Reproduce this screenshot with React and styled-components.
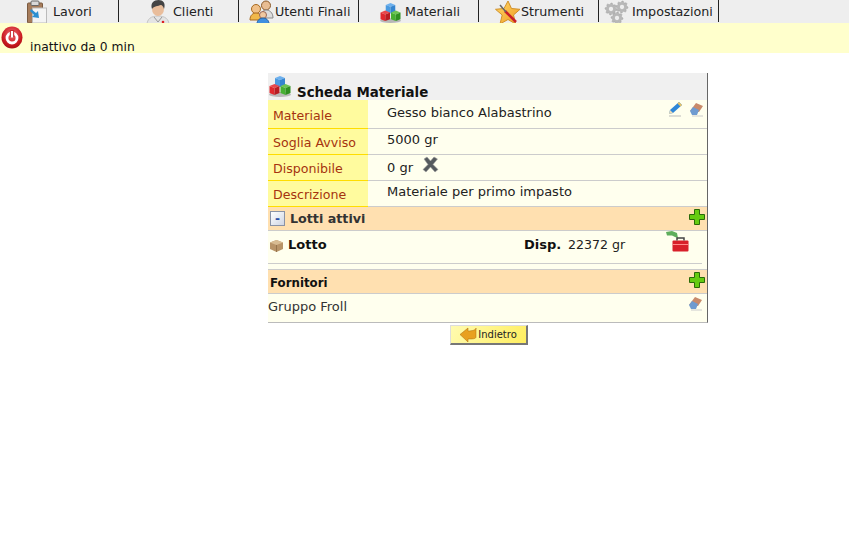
import React from 'react';
import styled, { createGlobalStyle } from 'styled-components';

const Global = createGlobalStyle`
  html, body { margin: 0; padding: 0; background: #fff; }
  body { font-family: "DejaVu Sans", Verdana, sans-serif; font-size: 13px; color: #222; }
`;
const Page = styled.div`width: 849px; height: 535px; overflow: hidden; background: #fff;`;
const Nav = styled.nav`display: flex; height: 23px; background: #eeeeee; overflow: hidden;`;
const Tab = styled.div`
  width: 120px; height: 22px; box-sizing: border-box; flex: none;
  display: flex; align-items: center; gap: ${p => p.$gap}px; padding-left: ${p => p.$pl}px;
  border-right: 1px solid #222; font-size: 12.7px; color: #222; white-space: nowrap;
  &:first-child { width: 119px; }
`;
const TabIcon = styled.svg`
  width: ${p => p.$w}px; height: ${p => p.$h}px; flex: none; margin-top: ${p => p.$mt ?? 2}px;
  margin-bottom: ${p => p.$mb ?? 0}px; overflow: visible;
`;
const Notice = styled.div`height: 30px; background: #ffffcc; display: flex; align-items: flex-start; color: #111;`;
const NoticeText = styled.span`margin: 16px 0 0 7px; line-height: 16px; font-size: 12.3px;`;
const Power = styled.svg`width: 22px; height: 23px; margin: 3px 0 0 1px; flex: none;`;
const Panel = styled.section`
  width: 440px; margin: 20px 0 0 268px; box-sizing: border-box; border-right: 1px solid #666;
  background: #ffffee; border-bottom: 1px solid #bbb;
`;
const Title = styled.header`
  height: 27px; background: #f0f0f0; display: flex; align-items: flex-end; gap: 6px; padding-left: 1px;
  font-weight: bold; font-size: 13.4px; color: #111; line-height: 17px;
`;
const TitleText = styled.span`margin-bottom: -1px;`;
const Row = styled.div`display: grid; grid-template-columns: 100px 1fr; height: ${p => p.$h}px; box-sizing: border-box;`;
const Label = styled.div`
  background: #fffb9e; border-bottom: 1px solid #ffdd00; color: #a5330f; font-size: 12.6px;
  padding: ${p => p.$pt ?? 6}px 0 0 5px; line-height: 16px;
`;
const Value = styled.div`
  border-bottom: 1px solid #ccc; padding: ${p => p.$pt ?? 5}px 6px 0 19px; line-height: 16px; color: #222;
  display: flex; align-items: flex-start; justify-content: space-between;
`;
const Inline = styled.span`display: inline-flex; align-items: flex-start; gap: 9px;`;
const Actions = styled.span`display: inline-flex; gap: 5px; margin: -4px ${p => p.$mr ?? -4}px 0 0;`;
const Small = styled.svg`
  width: ${p => p.$w || 16}px; height: ${p => p.$h || 16}px; flex: none; overflow: visible; margin-top: ${p => p.$mt || 0}px;
`;
const Section = styled.div`
  height: ${p => p.$h}px; box-sizing: border-box; background: #ffe0b0; display: flex; align-items: center;
  justify-content: space-between; border-bottom: 1px solid #ccc; border-top: ${p => p.$top ? '1px solid #ccc' : 'none'};
  font-weight: bold; font-size: ${p => p.$fs || 13}px; padding: 0 2px 0 2px; color: ${p => p.$c || '#333'};
`;
const SectionLead = styled.span`display: inline-flex; align-items: center; gap: 5px; font-size: 12.7px;`;
const SectionName = styled.span`padding-top: 2px;`;
const Toggle = styled.span`
  width: 15px; height: 15px; box-sizing: border-box; border: 1px solid #8a93a6; background: linear-gradient(135deg,#fff,#cfd6e4);
  color: #2c4fa8; display: flex; align-items: center; justify-content: center; font-size: 12px; line-height: 12px;
`;
const LotRow = styled.div`
  height: 33px; box-sizing: border-box; margin-right: 5px; border-bottom: 1px solid #ccc;
  display: flex; align-items: flex-start; padding-top: 6px;
`;
const LotName = styled.span`display: inline-flex; align-items: flex-start; gap: 4px; width: 256px; font-weight: bold; color: #111; padding-left: 1px; box-sizing: border-box; line-height: 16px;`;
const Disp = styled.span`font-weight: bold; color: #111; width: 44px; line-height: 16px;`;
const Qty = styled.span`line-height: 16px; width: 97px; color: #222; font-size: 12.6px;`;
const Spacer = styled.div`height: 5px;`;
const Supplier = styled.div`
  height: 28px; display: flex; justify-content: space-between; padding: 5px 3px 0 0; box-sizing: border-box; line-height: 16px; color: #333;
`;
const Footer = styled.div`display: flex; justify-content: center; width: 440px; margin: 2px 0 0 268px; padding-left: 2px; box-sizing: border-box;`;
const Button = styled.button`
  width: 78px; height: 20px; box-sizing: border-box; padding: 0; margin: 0; font: 10px "DejaVu Sans", sans-serif; color: #222;
  background: linear-gradient(120deg, #fffbb0, #ffee60); border-style: solid; border-color: #ddd #777 #777 #ddd;
  display: flex; align-items: center; justify-content: center; gap: 1px; border-width: 1px 2px 2px 1px;
`;
const ArrowIcon = styled.svg`width: 17px; height: 15px; flex: none;`;

const Clipboard = () => (
  <TabIcon $w={22} $h={25} $mt={3} viewBox="0 0 22 25">
    <rect x="1.500" y="3" width="15" height="20" rx="1" fill="#a67c5b" stroke="#7a5a40" />
    <rect x="5" y="1" width="8" height="4.500" rx="1" fill="#d8d8d8" stroke="#666" />
    <rect x="6.500" y="8" width="14" height="15" fill="#f4f4f4" stroke="#bbb" />
    <path d="M5 9l5 4 2-2 1 7-7-1 2-2-4-4z" fill="#2b8fd0" />
  </TabIcon>
);
const Doctor = () => (
  <TabIcon $w={24} $h={26} $mt={4} viewBox="0 0 24 26">
    <path d="M1 25c0-6 4-9 11-9s11 3 11 9c-6 2-16 2-22 0z" fill="#e4e4e4" stroke="#c4c4c4" />
    <ellipse cx="12" cy="9" rx="6" ry="7" fill="#e9bd9b" />
    <path d="M6 9C4 3 8 0 12.500 0S20 3 18 9c-1-3-2-4-3-4-3 1-7 1-9 4z" fill="#444" />
    <path d="M8 17l4 5 4-5" fill="none" stroke="#999" />
    <circle cx="17" cy="22" r="1.300" fill="#d22" />
  </TabIcon>
);
const Users = () => (
  <TabIcon $w={25} $h={24} viewBox="0 0 25 24">
    <circle cx="17" cy="5.500" r="4.500" fill="#e8bd92" stroke="#8a5a2a" />
    <path d="M12 18c0-5 2-8 5-8s7 2 7 8z" fill="#ddd" stroke="#888" />
    <circle cx="7" cy="9" r="4.500" fill="#f0c088" stroke="#a86a20" />
    <path d="M1 20c0-5 3-7 6-7s6 2 6 7z" fill="#f0b84a" stroke="#a86a20" />
    <circle cx="14" cy="15" r="3.500" fill="#f0c8a0" stroke="#965" />
    <path d="M8 24c0-4 3-6 6-6s6 2 6 6z" fill="#3f8fe0" stroke="#24609f" />
  </TabIcon>
);
const Cube = ({ x, y, top, left, right }) => (
  <g transform={`translate(${x} ${y})`}>
    <path d="M0 2L5 0l5 2L5 4z" fill={top} />
    <path d="M0 2L5 4v7L0 9z" fill={left} />
    <path d="M10 2L5 4v7l5-2z" fill={right} />
  </g>
);
const Cubes = ({ w = 21, h = 20, mt = 3, mb = 0 }) => (
  <TabIcon $w={w} $h={h} $mt={mt} $mb={mb} viewBox="0 0 22 21">
    <ellipse cx="11" cy="18.500" rx="11" ry="2.500" fill="#8a8a8a" opacity=".55" />
    <Cube x={6} y={0} top="#6cb0ee" left="#4a9ae0" right="#3585d0" />
    <Cube x={0.500} y={8} top="#e8484c" left="#e0282e" right="#b81c22" />
    <Cube x={11.500} y={8} top="#6cc452" left="#46b032" right="#2f9020" />
  </TabIcon>
);
const Star = () => (
  <TabIcon $w={25} $h={25} $mt={4} viewBox="0 0 25 25">
    <defs>
      <linearGradient id="starFill" x1="0" y1="0" x2="1" y2="1">
        <stop offset="0" stopColor="#ffd968" /><stop offset="1" stopColor="#f09a20" />
      </linearGradient>
    </defs>
    <path d="M13 0l3.500 7.500 8.500.8-6.500 5.700 2.200 9L13 18.500 5 23l2.200-9L.5 8.300 9 7.500z" fill="url(#starFill)" stroke="#d0902a" />
    <path d="M10 10l11 11" stroke="#c9202a" strokeWidth="2.600" />
    <path d="M5 4l6 7" stroke="#666" strokeWidth="1.500" />
  </TabIcon>
);
const gearPath = (cx, cy, R, r, n) => {
  const pts = [];
  for (let i = 0; i < n * 4; i++) {
    const a = (i / (n * 4)) * Math.PI * 2;
    const rad = i % 4 < 2 ? R : r;
    pts.push(`${(cx + rad * Math.cos(a)).toFixed(1)} ${(cy + rad * Math.sin(a)).toFixed(1)}`);
  }
  return `M${pts.join('L')}z`;
};
const Gear = ({ x, y, R }) => (
  <g>
    <path d={gearPath(x, y, R, R * 0.78, 8)} fill="#b8b8b8" stroke="#a2a2a2" strokeWidth=".5" />
    <circle cx={x} cy={y} r={R * 0.36} fill="#eee" />
  </g>
);
const Gears = () => (
  <TabIcon $w={23} $h={24} viewBox="0 0 23 24">
    <Gear x={6} y={9} R={6} /><Gear x={17} y={7} R={6} /><Gear x={12} y={18} R={6} />
  </TabIcon>
);
const PowerIcon = () => (
  <Power viewBox="0 0 22 23">
    <defs>
      <radialGradient id="ballFill" cx=".5" cy=".35" r=".7">
        <stop offset="0" stopColor="#ef6a6e" /><stop offset=".7" stopColor="#c8181e" /><stop offset="1" stopColor="#a01015" />
      </radialGradient>
    </defs>
    <ellipse cx="11" cy="11.500" rx="10.500" ry="11" fill="url(#ballFill)" />
    <circle cx="11" cy="12" r="5" fill="none" stroke="#fff" strokeWidth="2.800" />
    <rect x="8.800" y="4" width="4.400" height="7" fill="#c8282c" />
    <rect x="9.900" y="5" width="2.200" height="6.500" fill="#fff" />
  </Power>
);
const Pencil = () => (
  <Small viewBox="0 0 16 16">
    <path d="M1 13l1-4 9-8 3 3-9 8z" fill="#2f86d8" />
    <path d="M1 13l1-4 3 3z" fill="#f1dcb4" />
    <path d="M11 1l3 3-1.500 1.500-3-3z" fill="#e8c060" />
    <path d="M1 15h12" stroke="#bbb" />
  </Small>
);
const Eraser = () => (
  <Small viewBox="0 0 16 16">
    <path d="M1 10l6-8 7 3-4 6z" fill="#c98a6a" />
    <path d="M1 10l3-4 6 3-2 5H3z" fill="#6f9bd0" />
    <path d="M3 15h11" stroke="#ccc" />
  </Small>
);
const Cross = () => (
  <Small $w={17} $h={17} $mt={-4} viewBox="0 0 17 17">
    <path d="M2 3l3-2 3.500 4L12 1l3.500 2L11 8.500l5 5-3 2.500-4.500-5L4 16l-3-2.500L6 8.500z" fill="#555a5e" stroke="#a0a0a0" strokeWidth=".6" />
  </Small>
);
const Plus = () => (
  <Small $mt={-4} viewBox="0 0 16 16">
    <path d="M5.500 .5h5v5h5v5h-5v5h-5v-5h-5v-5h5z" fill="#66cc11" stroke="#2a6a08" />
  </Small>
);
const Box = () => (
  <Small $w={15} $h={13} $mt={2} viewBox="0 0 15 13">
    <path d="M1 3.500L7.500 1 14 3.500V10l-6.500 3L1 10z" fill="#b89468" />
    <path d="M1 3.500L7.500 6 14 3.500 7.500 1z" fill="#d8bc92" />
    <path d="M7.500 6v7" stroke="#96744c" />
  </Small>
);
const Toolbox = () => (
  <Small $w={24} $h={22} $mt={-6} viewBox="0 0 24 22">
    <path d="M1 1l6-1 5 2 1 5-3-1-3-1.500H2z" fill="#5fae5c" />
    <rect x="7.500" y="9.500" width="16" height="11" rx="1" fill="#d8202a" />
    <path d="M12 9.500V7h7v2.500" fill="none" stroke="#444" strokeWidth="1.500" />
    <rect x="7.500" y="13" width="16" height="1" fill="#ff8a8a" />
  </Small>
);
const Arrow = () => (
  <ArrowIcon viewBox="0 0 17 15">
    <path d="M0 7.500L8 1v3c4 0 8-1 8-3v9c0 2-4 2-8 2v3z" fill="#e8a020" stroke="#a86a10" strokeWidth=".5" />
  </ArrowIcon>
);

const tabs = [
  { t: 'Lavori', I: Clipboard, gap: 5, pl: 26 },
  { t: 'Clienti', I: Doctor, gap: 3, pl: 27 },
  { t: 'Utenti Finali', I: Users, gap: 1, pl: 10 },
  { t: 'Materiali', I: Cubes, gap: 4, pl: 21 },
  { t: 'Strumenti', I: Star, gap: 1, pl: 16 },
  { t: 'Impostazioni', I: Gears, gap: 4, pl: 6 },
];
export default function App() {
  return (
    <Page>
      <Global />
      <Nav>
        {tabs.map(({ t, I, gap, pl }) => (
          <Tab key={t} $gap={gap} $pl={pl}><I />{t}</Tab>
        ))}
      </Nav>
      <Notice><PowerIcon /><NoticeText>inattivo da 0 min</NoticeText></Notice>
      <Panel>
        <Title><Cubes w={22} h={21} mt={0} mb={3} /><TitleText>Scheda Materiale</TitleText></Title>
        <Row $h={29}><Label $pt={8}>Materiale</Label><Value>Gesso bianco Alabastrino<Actions><Pencil /><Eraser /></Actions></Value></Row>
        <Row $h={26}><Label>Soglia Avviso</Label><Value $pt={3}>5000 gr</Value></Row>
        <Row $h={26}><Label>Disponibile</Label><Value><Inline>0 gr <Cross /></Inline></Value></Row>
        <Row $h={26}><Label>Descrizione</Label><Value $pt={3}>Materiale per primo impasto</Value></Row>
        <Section $h={24}><SectionLead><Toggle>-</Toggle>Lotti attivi</SectionLead><Plus /></Section>
        <LotRow>
          <LotName><Box />Lotto</LotName>
          <Disp>Disp.</Disp><Qty>22372 gr</Qty>
          <Toolbox />
        </LotRow>
        <Spacer />
        <Section $h={25} $top $c="#111" $fs={11.8}><SectionName>Fornitori</SectionName><Plus /></Section>
        <Supplier>Gruppo Froll<Actions $mr={0}><Eraser /></Actions></Supplier>
      </Panel>
      <Footer><Button><Arrow />Indietro</Button></Footer>
    </Page>
  );
}
